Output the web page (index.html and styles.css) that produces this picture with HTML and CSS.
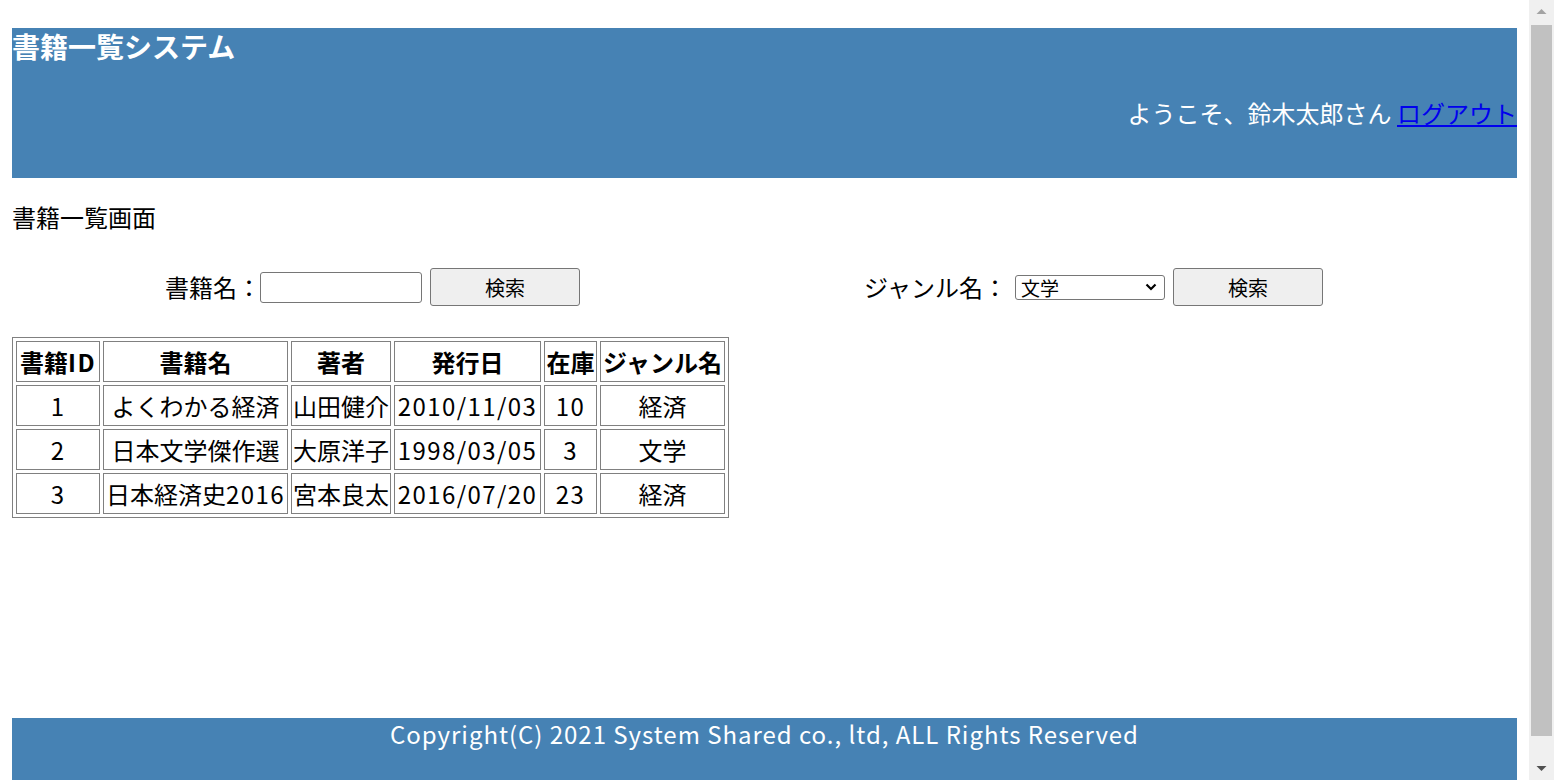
FILE: index.html
```html
<!DOCTYPE html>
<html lang="ja">
<head>
<meta charset="utf-8">
<title>書籍一覧システム</title>
<link rel="stylesheet" href="styles.css">
</head>
<body>
<header class="site-header">
  <h1 class="site-title">書籍一覧システム</h1>
  <div class="welcome">ようこそ、鈴木太郎さん <a href="#" class="logout">ログアウト</a></div>
</header>
<main class="main">
  <p class="page-title">書籍一覧画面</p>
  <div class="search-row">
    <form class="search-group">
      <label class="search-label">書籍名：</label>
      <input type="text" class="text-input">
      <button type="button" class="btn">検索</button>
    </form>
    <form class="search-group">
      <label class="search-label label-gap">ジャンル名：</label>
      <select class="genre-select">
        <option>文学</option>
        <option>経済</option>
      </select>
      <button type="button" class="btn">検索</button>
    </form>
  </div>
  <table class="book-table">
    <thead>
      <tr>
        <th class="c1">書籍<span class="lat">ID</span></th>
        <th class="c2">書籍名</th>
        <th class="c3">著者</th>
        <th class="c4">発行日</th>
        <th class="c5">在庫</th>
        <th class="c6">ジャンル名</th>
      </tr>
    </thead>
    <tbody>
      <tr><td><span class="lat">1</span></td><td>よくわかる経済</td><td>山田健介</td><td><span class="lat">2010/11/03</span></td><td><span class="lat">10</span></td><td>経済</td></tr>
      <tr><td><span class="lat">2</span></td><td>日本文学傑作選</td><td>大原洋子</td><td><span class="lat">1998/03/05</span></td><td><span class="lat">3</span></td><td>文学</td></tr>
      <tr><td><span class="lat">3</span></td><td>日本経済史<span class="lat">2016</span></td><td>宮本良太</td><td><span class="lat">2016/07/20</span></td><td><span class="lat">23</span></td><td>経済</td></tr>
    </tbody>
  </table>
</main>
<footer class="site-footer">Copyright(C) 2021 System Shared co., ltd, ALL Rights Reserved</footer>
<div class="fake-scrollbar" aria-hidden="true">
  <svg class="sb-arrow" width="25" height="24" viewBox="0 0 25 24"><path d="M7.5 14 L12.5 9 L17.5 14 Z" fill="#a3a3a3"/></svg>
  <div class="sb-thumb"></div>
  <svg class="sb-arrow" width="25" height="24" viewBox="0 0 25 24"><path d="M7.5 10 L12.5 15 L17.5 10 Z" fill="#505050"/></svg>
</div>
</body>
</html>
```

FILE: styles.css
```css
html {
  overflow: hidden;
}
body {
  margin: 0;
  padding: 28px 0 0 12px;
  font-family: "Noto Sans CJK JP", "Noto Sans", sans-serif;
  font-size: 24px;
  color: #000;
  background: #fff;
}
.site-header {
  width: 1505px;
  height: 150px;
  background: #4682b4;
  color: #fff;
  box-sizing: border-box;
}
.site-title {
  margin: 0;
  font-size: 28px;
  font-weight: bold;
  line-height: 36px;
}
.welcome {
  margin-top: 31px;
  text-align: right;
  line-height: 36px;
}
.logout {
  color: #0000ee;
  text-decoration: underline;
}
.main {
  width: 1505px;
}
.page-title {
  margin: 21px 0 0;
  line-height: 36px;
}
.search-row {
  display: grid;
  grid-template-columns: 721px 721px;
  margin-top: 33px;
  height: 38px;
}
.search-group {
  display: flex;
  align-items: center;
  justify-content: center;
  margin: 0;
}
.search-label {
  line-height: 36px;
}
.label-gap {
  margin-right: 8px;
}
.text-input {
  width: 162px;
  height: 31px;
  box-sizing: border-box;
  border: 1px solid #767676;
  border-radius: 3px;
  margin: 0 0 0 -1px;
  padding: 2px 4px;
  font-size: 20px;
}
.genre-select {
  width: 150px;
  height: 25px;
  box-sizing: border-box;
  border: 1px solid #767676;
  border-radius: 3px;
  margin: 0;
  padding: 0 0 0 5px;
  font-family: "Noto Sans CJK JP", sans-serif;
  font-size: 19px;
  line-height: 23px;
  color: #000;
  -webkit-appearance: none;
  appearance: none;
  background: #fff url("data:image/svg+xml,%3Csvg xmlns='http://www.w3.org/2000/svg' width='12' height='8' viewBox='0 0 12 8'%3E%3Cpath d='M1.5 1.5 L6 6 L10.5 1.5' fill='none' stroke='%23000' stroke-width='2.2'/%3E%3C/svg%3E") no-repeat right 7px center;
}
.btn {
  width: 150px;
  height: 38px;
  margin-left: 8px;
  box-sizing: border-box;
  border: 1px solid #767676;
  border-radius: 3px;
  background: #efefef;
  font-family: "Noto Sans CJK JP", sans-serif;
  font-size: 20px;
  color: #000;
  padding: 0;
}
.book-table {
  margin-top: 31px;
  border: 1px solid #808080;
  border-spacing: 3px;
  table-layout: fixed;
}
.book-table th,
.book-table td {
  box-sizing: border-box;
  border: 1px solid #808080;
  padding: 1px;
  height: 41px;
  line-height: 35px;
  text-align: center;
  white-space: nowrap;
  font-size: 24px;
}
.book-table th {
  font-weight: bold;
}
.lat {
  letter-spacing: 1.4px;
}
.c1 { width: 84px; }
.c2 { width: 185px; }
.c3 { width: 100px; }
.c4 { width: 147px; }
.c5 { width: 53px; }
.c6 { width: 125px; }
.site-footer {
  width: 1505px;
  height: 82px;
  margin-top: 200px;
  background: #4682b4;
  color: #fff;
  text-align: center;
  line-height: 32px;
  letter-spacing: 0.97px;
}
.fake-scrollbar {
  position: fixed;
  top: 0;
  right: 0;
  width: 25px;
  height: 100vh;
  background: #f0f0f0;
  display: flex;
  flex-direction: column;
}
.sb-arrow {
  display: block;
  flex: none;
}
.sb-thumb {
  flex: 1;
  margin: 1px 2px 20px;
  background: #c1c1c1;
}
```
